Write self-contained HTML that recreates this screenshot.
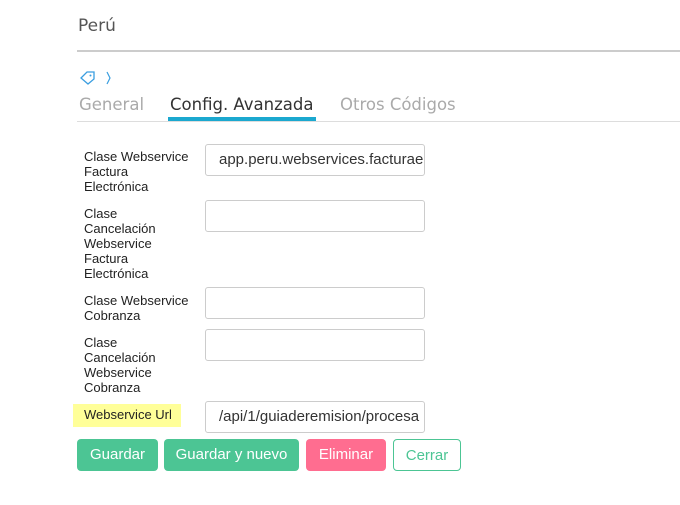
<!DOCTYPE html>
<html><head><style>
body{margin:0;width:680px;height:505px;background:#fff;position:relative;font-family:"Liberation Sans",sans-serif;overflow:hidden}
.a{position:absolute}
.t{font-family:"DejaVu Sans",sans-serif}
.lbl{position:absolute;left:84px;font-size:13px;line-height:15px;color:#222}
.inp{position:absolute;left:205px;width:218px;height:30px;border:1px solid #ccc;border-radius:3px;font-size:15px;color:#333;line-height:30px;padding-left:13px;box-sizing:border-box;width:220px;height:32px;overflow:hidden;white-space:nowrap}
.btn{position:absolute;top:439px;height:32px;border-radius:4px;color:#fff;font-size:15px;line-height:31px;text-align:center;box-sizing:border-box}
</style></head><body>
<div class="a t" style="left:78px;top:16px;font-size:17px;color:#555">Perú</div>
<div class="a" style="left:77px;top:50px;width:603px;height:2px;background:#ccc"></div>
<svg class="a" style="left:79px;top:70px" width="36" height="16" viewBox="0 0 36 16"><path d="M2 8 L8 2 L15 2 L15 9 L9 14 Z" fill="none" stroke="#3a9ee0" stroke-width="1.3"/><circle cx="11.5" cy="5.5" r="1" fill="#3a9ee0"/><path d="M28 2 L31 8 L28 14" fill="none" stroke="#3a9ee0" stroke-width="1.2"/></svg>
<div class="a t" style="left:79px;top:95px;font-size:16.5px;color:#aaa">General</div>
<div class="a t" style="left:170px;top:95px;font-size:16.5px;color:#333">Config. Avanzada</div>
<div class="a t" style="left:340px;top:95px;font-size:16.5px;color:#aaa">Otros Códigos</div>
<div class="a" style="left:77px;top:121px;width:603px;height:1px;background:#ddd"></div>
<div class="a" style="left:168px;top:117px;width:148px;height:4px;background:#1ba8cf"></div>
<div class="lbl" style="top:149px">Clase Webservice<br>Factura<br>Electrónica</div>
<div class="inp" style="top:144px">app.peru.webservices.facturae</div>
<div class="lbl" style="top:206px">Clase<br>Cancelación<br>Webservice<br>Factura<br>Electrónica</div>
<div class="inp" style="top:200px"></div>
<div class="lbl" style="top:293px">Clase Webservice<br>Cobranza</div>
<div class="inp" style="top:287px"></div>
<div class="lbl" style="top:335px">Clase<br>Cancelación<br>Webservice<br>Cobranza</div>
<div class="inp" style="top:329px"></div>
<div class="a" style="left:73px;top:404px;width:108px;height:23px;background:#ffff99"></div>
<div class="lbl" style="top:407px">Webservice Url</div>
<div class="inp" style="top:401px">/api/1/guiaderemision/procesa</div>
<div class="btn" style="left:77px;width:81px;background:#4cc594">Guardar</div>
<div class="btn" style="left:164px;width:135px;background:#4cc594">Guardar y nuevo</div>
<div class="btn" style="left:306px;width:80px;background:#ff6d90">Eliminar</div>
<div class="btn" style="left:393px;width:68px;border:1px solid #4cc594;color:#4cc594;background:#fff">Cerrar</div>
</body></html>
